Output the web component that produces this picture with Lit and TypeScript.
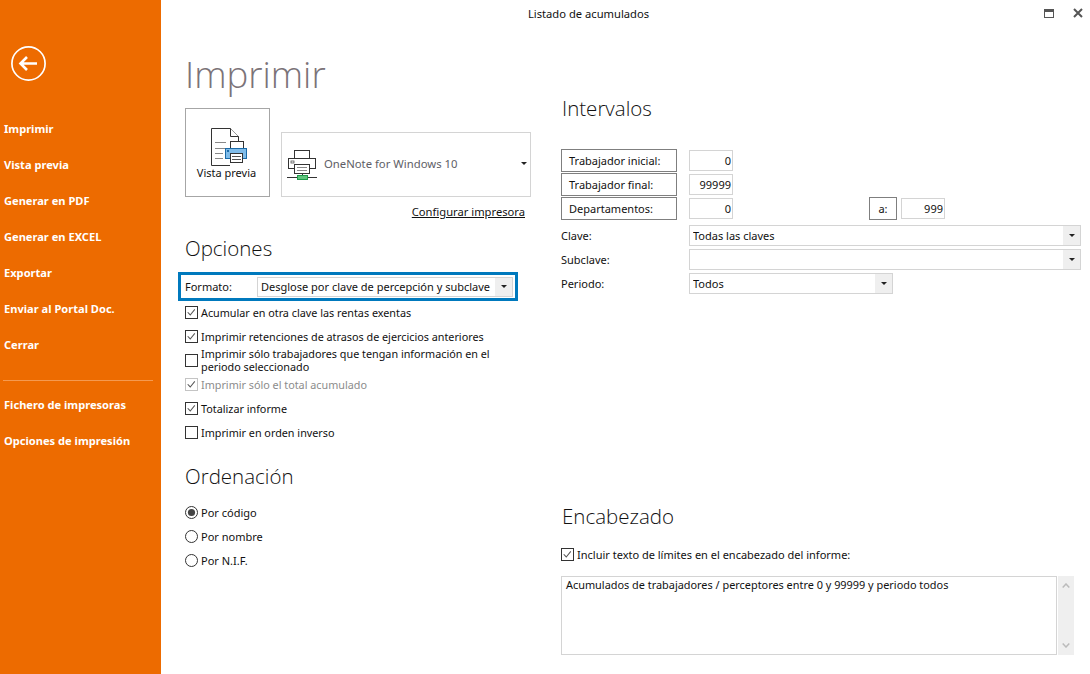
import { LitElement, html, css, svg } from "lit";
import { customElement } from "lit/decorators.js";

const caret = html`<svg class="caret" width="6" height="3" viewBox="0 0 6 3"><path d="M0 0h6L3 3z" fill="#222"/></svg>`;

@customElement("app-root")
export class AppRoot extends LitElement {
  static styles = css`
    :host { display: block; width: 1090px; height: 674px; overflow: hidden; background: #fff;
      font-family: "Noto Sans", "DejaVu Sans", sans-serif; font-size: 11px; color: #111; }
    * { box-sizing: border-box; }
    .app { display: flex; height: 674px; }
    .side { width: 161px; flex: none; background: #ed6b00; color: #fff; display: flex; flex-direction: column; }
    .back { margin: 46px 0 0 11px; height: 35px; }
    .back svg { display: block; }
    .nav { margin-top: 30px; display: flex; flex-direction: column; }
    .nav.sub { margin-top: 0; }
    .nav div { height: 36px; padding-left: 4px; font-weight: 700; font-size: 11.1px; line-height: 36px; white-space: nowrap; }
    .sep { height: 1px; background: #f59a50; margin: 17px 8px 6px 3px; }
    .main { flex: 1; display: flex; flex-direction: column; min-width: 0; }
    .bar { height: 28px; flex: none; display: flex; align-items: center; padding-bottom: 2px; }
    .bar .t { width: 855px; text-align: center; font-size: 11.2px; }
    .bar .wb { margin-left: 28px; display: flex; align-items: center; gap: 19px; }
    .cols { display: flex; flex: 1; }
    .left { width: 400px; flex: none; padding-left: 24px; display: flex; flex-direction: column; }
    .right { flex: 1; display: flex; flex-direction: column; }
    h1 { margin: 21px 0 0 0; font-family: "Open Sans", sans-serif; font-weight: 300; font-size: 36.6px; line-height: 50px; color: #7b7378; height: 59px; }
    h2 { margin: 0; font-family: "Open Sans", sans-serif; font-weight: 300; font-size: 20.5px; line-height: 28px; color: #111; }
    .print { display: flex; align-items: flex-end; gap: 11px; width: 346px; }
    .pv { width: 85px; height: 89px; border: 1px solid #a6a6a6; display: flex; flex-direction: column; align-items: center; padding-top: 19px; }
    .pv span { margin: -1px 2px 0 0; line-height: 16px; white-space: nowrap; }
    .psel { width: 250px; height: 65px; border: 1px solid #d4d4d4; display: flex; align-items: center; padding: 0 3px 0 5px; }
    .psel span { margin-left: 7px; flex: 1; font-size: 11.3px; color: #5e5e66; padding-bottom: 3px; }
    .psel .caret { margin-bottom: 2px; }
    .cfgwrap { width: 340px; display: flex; justify-content: flex-end; margin-top: 7px; }
    .cfg { text-decoration: underline; line-height: 16px; white-space: nowrap; font-size: 11.2px; }
    .op { margin-top: 14px; }
    .fmt { margin: 10px 0 0 -7px; width: 340px; height: 29px; border: 3px solid #0079bd; display: flex; align-items: center; padding-left: 4px; }
    .fmt .l { width: 72px; }
    .sel { height: 21px; border: 1px solid #d4d4d4; display: flex; align-items: center; padding-left: 3px; background: #fff; white-space: nowrap; }
    .sel .v { flex: 1; overflow: hidden; }
    .sel .b { width: 17px; height: 19px; background: #efefef; display: flex; align-items: center; justify-content: center; }
    .fmt .sel { width: 256px; height: 20px; }
    .fmt .sel .b { height: 18px; }
    .checks { margin-top: -1px; display: flex; flex-direction: column; font-size: 10.8px; }
    .ck { display: flex; align-items: center; gap: 3px; height: 24px; }
    .ck.two { line-height: 13px; }
    .ck.dis { color: #8c8c8c; }
    .box { width: 13px; height: 13px; flex: none; border: 1px solid #333; background: #fff; display: block; }
    .dis .box { border-color: #c4c4c4; }
    .ord { margin-top: 18px; }
    .radios { margin-top: 10px; display: flex; flex-direction: column; }
    .r { display: flex; align-items: center; gap: 3px; height: 24px; }
    .right h2 { margin-left: 1px; }
    .right h2.int { margin-top: 66px; }
    .form { margin-top: 26px; display: flex; flex-direction: column; width: 520px; }
    .row { display: flex; align-items: center; height: 24px; }
    .row .lb { width: 116px; height: 23px; border: 1px solid #7f7f7f; margin-right: 12px; display: flex; align-items: center; padding-left: 7px; }
    .in { width: 44px; height: 21px; border: 1px solid #d4d4d4; text-align: right; line-height: 19px; padding-right: 1px; }
    .a { width: 28px; height: 23px; border: 1px solid #7f7f7f; margin: 0 4px 0 136px; display: flex; align-items: center; justify-content: center; }
    .lc { width: 128px; }
    .row .sel.w { width: 392px; }
    .row .sel.n { width: 204px; }
    .gap { height: 3px; }
    .enc { margin-top: 207px; }
    .ckh { margin-top: 12px; display: flex; align-items: center; gap: 3px; height: 24px; }
    .ta { margin-top: 10px; display: flex; gap: 1px; height: 79px; }
    .tb { width: 496px; border: 1px solid #d4d4d4; padding: 1px 4px; line-height: 14px; font-size: 10.9px; }
    .sb { width: 16px; background: #efefef; display: flex; flex-direction: column; justify-content: space-between; align-items: center; padding: 7px 0; }
  `;

  private check(on: boolean) {
    return html`<svg class="box" viewBox="0 0 13 13">${on ? svg`<path d="M2 6.2 5 9.4 10.4 2.8" fill="none" stroke="#555" stroke-width="1.2"/>` : ""}</svg>`;
  }

  private radio(on: boolean) {
    return html`<svg width="13" height="13" viewBox="0 0 13 13"><circle cx="6.5" cy="6.5" r="6" fill="#fff" stroke="#333"/>${on ? svg`<circle cx="6.5" cy="6.5" r="3.6" fill="#444"/>` : ""}</svg>`;
  }

  render() {
    const nav1 = ["Imprimir", "Vista previa", "Generar en PDF", "Generar en EXCEL", "Exportar", "Enviar al Portal Doc.", "Cerrar"];
    const nav2 = ["Fichero de impresoras", "Opciones de impresión"];
    return html`<div class="app">
      <aside class="side">
        <div class="back"><svg width="35" height="35" viewBox="0 0 35 35"><circle cx="17.5" cy="17.5" r="16.6" fill="none" stroke="#fff" stroke-width="1.7"/><path d="M9.500 17.500H26M16 11l-6.500 6.500L16 24" fill="none" stroke="#fff" stroke-width="2.600"/></svg></div>
        <div class="nav">${nav1.map((n) => html`<div>${n}</div>`)}</div>
        <div class="sep"></div>
        <div class="nav sub">${nav2.map((n) => html`<div>${n}</div>`)}</div>
      </aside>
      <div class="main">
        <div class="bar"><div class="t">Listado de acumulados</div>
          <div class="wb">
            <svg width="10" height="9" viewBox="0 0 10 9"><rect x=".5" y=".5" width="9" height="8" fill="none" stroke="#555"/><rect width="10" height="3" fill="#555"/></svg>
            <svg width="10" height="10" viewBox="0 0 10 10"><path d="M1 1l8 8M9 1l-8 8" stroke="#555" stroke-width="2"/></svg>
          </div>
        </div>
        <div class="cols">
          <section class="left">
            <h1>Imprimir</h1>
            <div class="print">
              <div class="pv">
                <svg width="41" height="38" viewBox="0 0 41 38">
                  <path d="M4.500.5H23.500L31.500 8.500V13.500M4.500.5V37.500H23" fill="#fff" stroke="#333"/>
                  <path d="M23.500.5V8.500H31.500" fill="#fff" stroke="#333"/>
                  <path d="M8 14.500h11M8 20.500h10M8 25.500h8M8 30.500h8" stroke="#888"/>
                  <rect x="23.500" y="13.500" width="13" height="7" fill="#fff" stroke="#333"/>
                  <rect x="18.500" y="20.500" width="21" height="10" fill="#7fbcea" stroke="#1a6aa8"/>
                  <rect x="20" y="22" width="2" height="2" fill="#1a6aa8"/>
                  <rect x="23.500" y="25.500" width="12" height="9" fill="#fff" stroke="#333"/>
                  <path d="M25 28.500h9M25 31.500h9" stroke="#555"/>
                </svg>
                <span>Vista previa</span>
              </div>
              <div class="psel">
                <svg width="30" height="30" viewBox="0 0 30 30">
                  <rect x="7.500" y=".5" width="15" height="8" fill="#fff" stroke="#333"/>
                  <rect x="1.500" y="8.500" width="27" height="10" fill="#fff" stroke="#333"/>
                  <rect x="4" y="11" width="3" height="2" fill="none" stroke="#555" stroke-width=".8"/>
                  <rect x="7.500" y="14.500" width="15" height="9" fill="#fff" stroke="#333"/>
                  <path d="M10 17.500h10M10 20.500h10" stroke="#888"/>
                  <path d="M15.500 23.500v3M0 27.500h30" stroke="#333"/>
                  <rect x="10.500" y="25.500" width="10" height="4" fill="#5fc47c" stroke="#1f9a4a"/>
                </svg>
                <span>OneNote for Windows 10</span>${caret}
              </div>
            </div>
            <div class="cfgwrap"><div class="cfg">Configurar impresora</div></div>
            <h2 class="op">Opciones</h2>
            <div class="fmt"><div class="l">Formato:</div><div class="sel"><div class="v">Desglose por clave de percepción y subclave</div><div class="b">${caret}</div></div></div>
            <div class="checks">
              <div class="ck">${this.check(true)}<span>Acumular en otra clave las rentas exentas</span></div>
              <div class="ck">${this.check(true)}<span>Imprimir retenciones de atrasos de ejercicios anteriores</span></div>
              <div class="ck two">${this.check(false)}<span>Imprimir sólo trabajadores que tengan información en el<br>periodo seleccionado</span></div>
              <div class="ck dis">${this.check(true)}<span>Imprimir sólo el total acumulado</span></div>
              <div class="ck">${this.check(true)}<span>Totalizar informe</span></div>
              <div class="ck">${this.check(false)}<span>Imprimir en orden inverso</span></div>
            </div>
            <h2 class="ord">Ordenación</h2>
            <div class="radios">
              <div class="r">${this.radio(true)}<span>Por código</span></div>
              <div class="r">${this.radio(false)}<span>Por nombre</span></div>
              <div class="r">${this.radio(false)}<span>Por N.I.F.</span></div>
            </div>
          </section>
          <section class="right">
            <h2 class="int">Intervalos</h2>
            <div class="form">
              <div class="row"><div class="lb">Trabajador inicial:</div><div class="in">0</div></div>
              <div class="row"><div class="lb">Trabajador final:</div><div class="in">99999</div></div>
              <div class="row"><div class="lb">Departamentos:</div><div class="in">0</div><div class="a">a:</div><div class="in">999</div></div>
              <div class="gap"></div>
              <div class="row"><div class="lc">Clave:</div><div class="sel w"><div class="v">Todas las claves</div><div class="b">${caret}</div></div></div>
              <div class="row"><div class="lc">Subclave:</div><div class="sel w"><div class="v"></div><div class="b">${caret}</div></div></div>
              <div class="row"><div class="lc">Periodo:</div><div class="sel n"><div class="v">Todos</div><div class="b">${caret}</div></div></div>
            </div>
            <div class="enc">
              <h2>Encabezado</h2>
              <div class="ckh">${this.check(true)}<span>Incluir texto de límites en el encabezado del informe:</span></div>
              <div class="ta"><div class="tb">Acumulados de trabajadores / perceptores entre 0 y 99999 y periodo todos</div>
                <div class="sb"><svg width="8" height="5" viewBox="0 0 8 5"><path d="M.7 4.500 4 1l3.300 3.500" fill="none" stroke="#bbb" stroke-width="1.500"/></svg><svg width="8" height="5" viewBox="0 0 8 5"><path d="M.7.5 4 4 7.300.5" fill="none" stroke="#bbb" stroke-width="1.500"/></svg></div>
              </div>
            </div>
          </section>
        </div>
      </div>
    </div>`;
  }
}
